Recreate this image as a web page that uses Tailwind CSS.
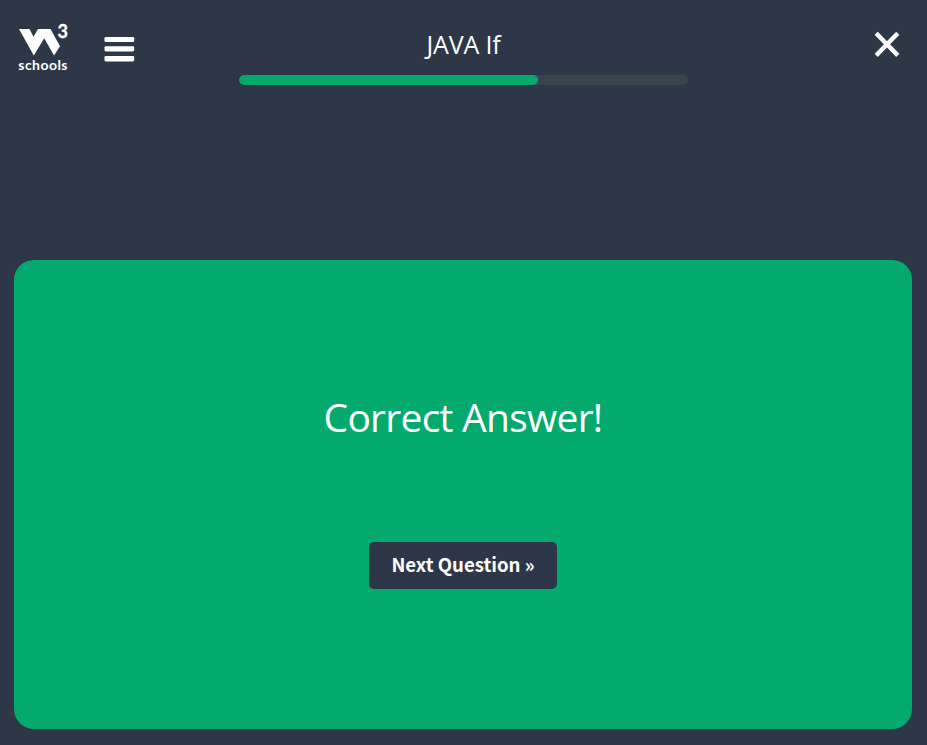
<!DOCTYPE html>
<html lang="en">
<head>
<meta charset="utf-8">
<title>JAVA If</title>
<script src="https://cdn.jsdelivr.net/npm/@tailwindcss/browser@4"></script>
</head>
<body class="flex h-screen flex-col overflow-hidden bg-[#2e3748] px-[14px] pb-4 font-['Open_Sans',sans-serif] text-white">
<header class="flex h-[260px] shrink-0 items-start justify-between">
  <div class="flex w-[225px] items-start">
    <svg class="mt-5 shrink-0" width="60" height="56" viewBox="14 20 60 56" fill="#fff">
      <path d="M19 29H29.5L33.5 36.8L38 29H50.5L60 46.3L54 55.6L44.2 38.2L33.8 55.6Z"/>
      <text x="57.6" y="37.8" font-family="Lato" font-weight="700" font-size="18" textLength="10.5" lengthAdjust="spacingAndGlyphs" stroke="#fff" stroke-width="0.3">3</text>
      <text x="18.3" y="70" font-family="Lato" font-weight="700" font-size="14" textLength="49.2" lengthAdjust="spacing">schools</text>
    </svg>
    <button class="mt-[37px] ml-[30px]" aria-label="Menu">
      <svg width="31" height="26" viewBox="0 0 31 26" fill="#fff">
        <rect x="0.5" y="0" width="29.7" height="5" rx="1.3"/>
        <rect x="0.5" y="9.2" width="29.7" height="5.2" rx="1.3"/>
        <rect x="0.5" y="19" width="29.7" height="5.4" rx="1.3"/>
      </svg>
    </button>
  </div>
  <div class="flex w-[449px] flex-col items-center pt-[24px]">
    <h1 class="h-[51px] text-[25px] leading-10 whitespace-nowrap tracking-[-0.15px]">JAVA If</h1>
    <div class="h-[10px] w-full overflow-hidden rounded-[5px] bg-[#38444d]">
      <div class="h-full w-[299px] rounded-[5px] bg-[#04aa6d]"></div>
    </div>
  </div>
  <div class="flex w-[225px] justify-end pt-[31px] pr-[13px]">
    <button aria-label="Close">
      <svg width="26" height="27" viewBox="0 0 26 27" fill="none" stroke="#fff" stroke-width="4.4"><path d="M2.2 2.2L23.8 24.4M23.8 2.2L2.2 24.4"/></svg>
    </button>
  </div>
</header>
<main class="flex h-[469px] w-[898px] flex-col items-center rounded-[20px] bg-[#04aa6d]">
  <h2 class="mt-[127px] h-[60px] text-[39px] leading-[60px] whitespace-nowrap tracking-[-0.75px]">Correct Answer!</h2>
  <button class="mt-[95px] h-[47px] w-[188px] rounded-[5px] bg-[#2e3748] pb-[4px] font-['Noto_Sans_CJK_SC',sans-serif] text-[18.6px] leading-[43px] font-bold whitespace-nowrap">Next Question »</button>
</main>
</body>
</html>
